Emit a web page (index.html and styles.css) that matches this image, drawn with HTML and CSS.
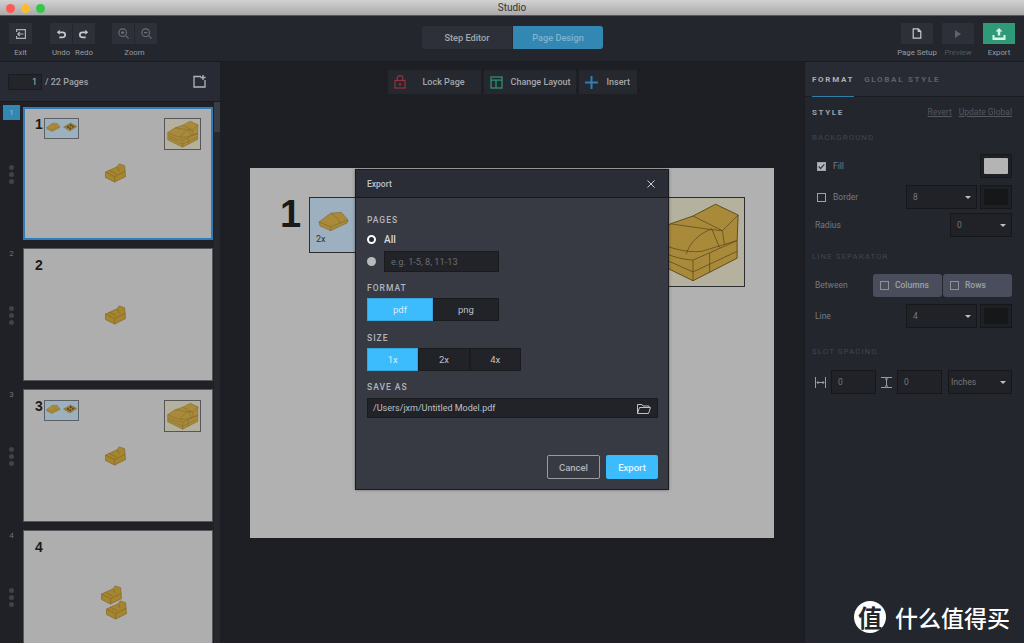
FILE: index.html
```html
<!DOCTYPE html>
<html lang="en">
<head>
    <meta charset="UTF-8">
    <meta name="viewport" content="width=device-width, initial-scale=1.0">
    <title>Studio</title>
    <link rel="stylesheet" href="styles.css">
</head>
<body>
    <svg class="defs" width="0" height="0">
        <symbol id="model" viewBox="0 0 105 89">
            <path d="M8 40 30 26 53 18 76 6 99 17 98 43V61L53 84 8 62Z" fill="#a98a3a" stroke="#5f4c1e"/>
            <path d="M8 40C25 50 45 56 62 54L98 43M8 48C25 58 40 62 53 63L98 43M8 55 53 75 98 54M53 63V84M70 56V76M30 26C45 28 70 32 83 33L85 47M53 18 83 33 99 17M46 57C50 44 60 36 72 31M72 31 80 50" fill="none" stroke="#5f4c1e" stroke-width=".8"/>
        </symbol>
        <symbol id="wedge" viewBox="0 0 32 20">
            <path d="M1 11 13 2 24 1 31 9 30 12 13 20 2 15Z" fill="#a98a3a" stroke="#7d6428" stroke-width=".6"/>
            <path d="M1 11 13 16 31 9M13 16V20M13 2C18 5 22 9 23 12" fill="none" stroke="#7d6428" stroke-width=".6"/>
        </symbol>
        <symbol id="plate" viewBox="0 0 32 20">
            <path d="M1 10 17 1 31 9 15 19Z" fill="#9a7a2e" stroke="#6b5520" stroke-width=".6"/>
            <circle cx="11" cy="10" r="2" fill="#4e3e17"/><circle cx="17" cy="6" r="2" fill="#4e3e17"/>
            <circle cx="16" cy="13" r="2" fill="#4e3e17"/><circle cx="22" cy="9" r="2" fill="#4e3e17"/>
        </symbol>
        <symbol id="brick" viewBox="0 0 24 22">
            <path d="M1 10 14 4 16 1 22 3 23 15 11 21 1 16Z" fill="#a5852f" stroke="#7f6624" stroke-width=".7"/>
            <path d="M1 10 11 15 23 9M11 15V21M14 4 16 9M5 8 13 12" fill="none" stroke="#7f6624" stroke-width=".7"/>
        </symbol>
        <symbol id="caret" viewBox="0 0 8 4"><path d="M0 0H8L4 4Z" fill="currentColor"/></symbol>
    </svg>

    <div class="app">
        <div class="titlebar">
            <div class="lights"><i class="red"></i><i class="yellow"></i><i class="green"></i></div>
            <span>Studio</span>
        </div>

        <header class="toolbar">
            <div class="tool-left">
                <div class="tool-group">
                    <div class="tool-btns">
                        <div class="tool-btn"><svg width="10" height="10" viewBox="0 0 10 10" fill="none" stroke="#aeb0b5" stroke-width="1.2"><path d="M.6 3V.6H9.4V9.4H.6V7"/><path d="M7.5 5H1.8M3.8 3 1.8 5l2 2"/></svg></div>
                    </div>
                    <label>Exit</label>
                </div>
                <div class="tool-group">
                    <div class="tool-btns">
                        <div class="tool-btn"><svg width="10" height="10" viewBox="0 0 12 12" fill="none" stroke="#c8c9cc" stroke-width="2"><path d="M4 4H8a2.6 2.6 0 0 1 0 6H4"/><path d="M1 4 4.5 1V7Z" fill="#c8c9cc" stroke="none"/></svg></div>
                        <div class="tool-btn"><svg width="10" height="10" viewBox="0 0 12 12" fill="none" stroke="#c8c9cc" stroke-width="2"><path d="M8 4H4a2.6 2.6 0 0 0 0 6H8"/><path d="M11 4 7.5 1V7Z" fill="#c8c9cc" stroke="none"/></svg></div>
                    </div>
                    <div class="tool-btns">
                        <label class="pair">Undo</label>
                        <label class="pair">Redo</label>
                    </div>
                </div>
                <div class="tool-group zoom">
                    <div class="tool-btns">
                        <div class="tool-btn"><svg width="11" height="11" viewBox="0 0 13 13" fill="none" stroke="#6c6f76" stroke-width="1.3"><circle cx="5.5" cy="5.5" r="4.5"/><path d="M9 9 12.5 12.5M3.5 5.5H7.5M5.5 3.5V7.5"/></svg></div>
                        <div class="tool-btn"><svg width="11" height="11" viewBox="0 0 13 13" fill="none" stroke="#6c6f76" stroke-width="1.3"><circle cx="5.5" cy="5.5" r="4.5"/><path d="M9 9 12.5 12.5M3.5 5.5H7.5"/></svg></div>
                    </div>
                    <label>Zoom</label>
                </div>
            </div>
            <div class="mode-tabs">
                <div class="mode-tab">Step Editor</div>
                <div class="mode-tab active">Page Design</div>
            </div>
            <div class="tool-right">
                <div class="tool-group">
                    <div class="tool-btn wide"><svg width="10" height="11" viewBox="0 0 11 13" fill="none" stroke="#c8c9cc" stroke-width="1.4"><path d="M1 1H7L10 4V12H1Z"/><path d="M7 1V4H10" fill="#c8c9cc"/></svg></div>
                    <label>Page Setup</label>
                </div>
                <div class="tool-group">
                    <div class="tool-btn wide"><svg width="8" height="10" viewBox="0 0 8 10"><path d="M1 1 7 5 1 9Z" fill="#5f6268"/></svg></div>
                    <label class="off">Preview</label>
                </div>
                <div class="tool-group">
                    <div class="tool-btn wide export"><svg width="14" height="12" viewBox="0 0 14 12" fill="#dff2ea"><path d="M7 0 10.5 3.5H8.2V7.5H5.8V3.5H3.5Z"/><path d="M0.5 7H2.5V9.5H11.5V7H13.5V12H.5Z"/></svg></div>
                    <label>Export</label>
                </div>
            </div>
        </header>

        <main class="workspace">
            <aside class="pages">
                <div class="pages-head">
                    <div class="page-input">1</div>
                    <span class="page-total">/ 22 Pages</span>
                    <svg class="add-page" width="13" height="13" viewBox="0 0 13 13" fill="none" stroke="#b4b5b9" stroke-width="1.3"><path d="M8 1.5H1V12H12V5"/><path d="M10 0V5M7.5 2.5H12.5"/></svg>
                </div>
                <div class="pages-body">
                    <div class="thumb-list">
                        <div class="thumb-row">
                            <div class="gutter"><span class="row-num current">1</span><span class="dots"><i></i><i></i><i></i></span></div>
                            <div class="thumb selected">
                                <b class="thumb-num">1</b>
                                <div class="thumb-callout"><svg><use href="#wedge"/></svg><svg><use href="#plate"/></svg></div>
                                <div class="thumb-final"><svg><use href="#model"/></svg></div>
                                <svg class="thumb-brick"><use href="#brick"/></svg>
                            </div>
                        </div>
                        <div class="thumb-row">
                            <div class="gutter"><span class="row-num">2</span><span class="dots"><i></i><i></i><i></i></span></div>
                            <div class="thumb">
                                <b class="thumb-num">2</b>
                                <svg class="thumb-brick"><use href="#brick"/></svg>
                            </div>
                        </div>
                        <div class="thumb-row">
                            <div class="gutter"><span class="row-num">3</span><span class="dots"><i></i><i></i><i></i></span></div>
                            <div class="thumb">
                                <b class="thumb-num">3</b>
                                <div class="thumb-callout"><svg><use href="#wedge"/></svg><svg><use href="#plate"/></svg></div>
                                <div class="thumb-final"><svg><use href="#model"/></svg></div>
                                <svg class="thumb-brick"><use href="#brick"/></svg>
                            </div>
                        </div>
                        <div class="thumb-row">
                            <div class="gutter"><span class="row-num">4</span><span class="dots"><i></i><i></i><i></i></span></div>
                            <div class="thumb">
                                <b class="thumb-num">4</b>
                                <svg class="thumb-brick upper"><use href="#brick"/></svg>
                                <svg class="thumb-brick lower"><use href="#brick"/></svg>
                            </div>
                        </div>
                    </div>
                    <div class="scroll"><div class="scroll-bar"></div></div>
                </div>
            </aside>

            <section class="canvas">
                <div class="canvas-tools">
                    <div class="canvas-btn lock"><svg width="12" height="14" viewBox="0 0 12 14" fill="none" stroke="#96323f" stroke-width="1.2"><rect x="1" y="5.5" width="10" height="7.5"/><path d="M3.2 5.5V3.5a2.8 2.8 0 0 1 5.6 0V5.5"/><circle cx="6" cy="9.2" r=".6" fill="#96323f"/></svg><span>Lock Page</span></div>
                    <div class="canvas-btn layout"><svg width="13" height="13" viewBox="0 0 13 13" fill="none" stroke="#2f8f74" stroke-width="1.3"><rect x="1" y="1" width="11" height="11"/><path d="M1 4.2H12M6 4.2V12"/></svg><span>Change Layout</span></div>
                    <div class="canvas-btn insert"><svg width="13" height="13" viewBox="0 0 13 13" fill="none" stroke="#2f7fb8" stroke-width="2"><path d="M6.5 0V13M0 6.5H13"/></svg><span>Insert</span></div>
                </div>
                <div class="sheet">
                    <b class="sheet-num">1</b>
                    <div class="sheet-callout"><svg><use href="#wedge"/></svg><span>2x</span></div>
                    <div class="sheet-final"><svg><use href="#model"/></svg></div>
                </div>
            </section>

            <aside class="props">
                <div class="props-tabs">
                    <div class="props-tab active">FORMAT</div>
                    <div class="props-tab">GLOBAL STYLE</div>
                </div>
                <div class="props-body">
                    <div class="style-head">
                        <strong>STYLE</strong>
                        <span class="style-links"><a>Revert</a><a>Update Global</a></span>
                    </div>

                    <h4 class="section">BACKGROUND</h4>
                    <div class="prop-row">
                        <span class="check on"><svg width="8" height="7" viewBox="0 0 8 7" fill="none" stroke="#3a3c42" stroke-width="1.5"><path d="M.8 3.5 3 5.7 7.2 1"/></svg></span>
                        <span class="prop-name">Fill</span>
                        <span class="swatch"><i class="light"></i></span>
                    </div>
                    <div class="prop-row">
                        <span class="check"></span>
                        <span class="prop-name">Border</span>
                        <span class="select w71">8<svg class="caret"><use href="#caret"/></svg></span>
                        <span class="swatch"><i></i></span>
                    </div>
                    <div class="prop-row plain tight">
                        <span class="prop-name">Radius</span>
                        <span class="select w62">0<svg class="caret"><use href="#caret"/></svg></span>
                    </div>

                    <h4 class="section line-sep">LINE SEPARATOR</h4>
                    <div class="prop-row plain">
                        <span class="prop-name">Between</span>
                        <div class="toggles">
                            <span class="toggle"><span class="check"></span>Columns</span>
                            <span class="toggle"><span class="check"></span>Rows</span>
                        </div>
                    </div>
                    <div class="prop-row plain">
                        <span class="prop-name">Line</span>
                        <span class="select w71">4<svg class="caret"><use href="#caret"/></svg></span>
                        <span class="swatch"><i></i></span>
                    </div>

                    <h4 class="section slot">SLOT SPACING</h4>
                    <div class="spacing-row">
                        <svg width="11" height="11" viewBox="0 0 11 11" fill="none" stroke="#9a9ca1"><path d="M.5 0V11M10.5 0V11M2 5.5H9M3.5 4 2 5.5 3.5 7M7.5 4 9 5.5 7.5 7"/></svg>
                        <span class="num-input">0</span>
                        <svg width="11" height="11" viewBox="0 0 11 11" fill="none" stroke="#9a9ca1"><path d="M0 .5H11M0 10.5H11M5.5 2V9M4 2H7M4 9H7"/></svg>
                        <span class="num-input">0</span>
                        <span class="select unit">Inches<svg class="caret"><use href="#caret"/></svg></span>
                    </div>
                </div>
            </aside>
        </main>

        <div class="modal">
            <div class="modal-head">
                <span>Export</span>
                <svg width="8" height="8" viewBox="0 0 9 9" fill="none" stroke="#d0d1d4" stroke-width="1.1"><path d="M.5.5 8.5 8.5M8.5.5.5 8.5"/></svg>
            </div>
            <div class="modal-body">
                <div class="field-label">PAGES</div>
                <div class="radio-row all"><span class="radio on"></span><b>All</b></div>
                <div class="radio-row range"><span class="radio"></span><span class="range-input">e.g. 1-5, 8, 11-13</span></div>
                <div class="field-label format">FORMAT</div>
                <div class="segments">
                    <span class="seg on w65">pdf</span><span class="seg w66">png</span>
                </div>
                <div class="field-label size">SIZE</div>
                <div class="segments">
                    <span class="seg on w51">1x</span><span class="seg w51">2x</span><span class="seg w51">4x</span>
                </div>
                <div class="field-label saveas">SAVE AS</div>
                <div class="path-input">
                    <span>/Users/jxm/Untitled Model.pdf</span>
                    <svg width="14" height="11" viewBox="0 0 14 11" fill="none" stroke="#bfc0c4"><path d="M.5 10.5V1.5H5L6 3H12V4.5M.5 10.5H11.5L13.5 4.5H2.5L.5 10.5Z"/></svg>
                </div>
                <div class="modal-actions">
                    <span class="btn cancel">Cancel</span>
                    <span class="btn confirm">Export</span>
                </div>
            </div>
        </div>

        <div class="watermark">
            <span class="wm-logo">值</span>
            <span class="wm-text">什么值得买</span>
        </div>
    </div>
</body>
</html>
```

FILE: styles.css
```css
* {
    box-sizing: border-box;
}
body {
    margin: 0;
    font-family: Roboto, "Liberation Sans", sans-serif;
    background: #1d1f24;
}
.defs {
    position: absolute;
}
.app {
    position: relative;
    width: 1024px;
    height: 643px;
    overflow: hidden;
    display: flex;
    flex-direction: column;
}

/* title bar */
.titlebar {
    height: 16px;
    flex: none;
    display: flex;
    align-items: center;
    justify-content: center;
    position: relative;
    background: linear-gradient(#d2d2d2, #a9a9a9);
    border-bottom: 1px solid #54565a;
    font-size: 10px;
    color: #333;
}
.lights {
    position: absolute;
    left: 6px;
    top: 4px;
    display: flex;
    gap: 6px;
}
.lights i {
    width: 9px;
    height: 9px;
    border-radius: 50%;
}
.lights .red { background: #fc5b57; }
.lights .yellow { background: #fdbb2e; }
.lights .green { background: #33c748; }

/* top toolbar */
.toolbar {
    height: 46px;
    flex: none;
    display: flex;
    justify-content: space-between;
    position: relative;
    background: #23262d;
    border-bottom: 1px solid #191b1f;
    padding: 7px 9px 0;
}
.tool-left, .tool-right {
    display: flex;
}
.tool-left {
    gap: 18px;
}
.tool-right {
    gap: 9px;
}
.tool-group {
    display: flex;
    flex-direction: column;
    align-items: center;
}
.tool-group.zoom {
    margin-left: -1px;
}
.tool-right .tool-group {
    width: 32px;
}
.tool-group label {
    margin-top: 4px;
    font-size: 7.8px;
    line-height: 10px;
    color: #9a9ca1;
    white-space: pre;
}
.tool-group label.off {
    color: #55585e;
}
.tool-group label.pair {
    width: 22px;
    text-align: center;
}
.tool-btns {
    display: flex;
    gap: 1px;
}
.tool-btn {
    width: 22px;
    height: 21px;
    display: flex;
    align-items: center;
    justify-content: center;
    background: #2d3039;
}
.tool-left .tool-group:first-child .tool-btn {
    width: 23px;
}
.tool-btn.wide {
    width: 32px;
}
.tool-btn.export {
    background: #2f9a78;
}
.mode-tabs {
    position: absolute;
    left: 422px;
    top: 10px;
    display: flex;
    gap: 1px;
}
.mode-tab {
    width: 90px;
    height: 23px;
    display: flex;
    align-items: center;
    justify-content: center;
    background: #2d3039;
    border-radius: 3px 0 0 3px;
    font-size: 9.2px;
    font-weight: 500;
    color: #a5a7ac;
}
.mode-tab.active {
    background: #3388b3;
    border-radius: 0 3px 3px 0;
    color: #7fb4cf;
}

.workspace {
    flex: 1;
    display: flex;
    min-height: 0;
}

/* left page list */
.pages {
    width: 220px;
    flex: none;
    display: flex;
    flex-direction: column;
    background: #1f2126;
}
.pages-head {
    height: 40px;
    flex: none;
    display: flex;
    align-items: center;
    padding: 0 14px 0 8px;
    background: #282b33;
    border-bottom: 1px solid #1a1c20;
}
.page-input {
    width: 34px;
    height: 16px;
    padding-right: 4px;
    text-align: right;
    background: #23252b;
    border: 1px solid #1b1c20;
    font-size: 9px;
    line-height: 14px;
    color: #b8b9bd;
}
.page-total {
    margin-left: 3px;
    font-size: 9px;
    font-weight: 500;
    color: #a0a2a7;
}
.add-page {
    margin-left: auto;
}
.pages-body {
    flex: 1;
    display: flex;
    min-height: 0;
    overflow: hidden;
}
.thumb-list {
    width: 214px;
    padding-top: 5px;
}
.thumb-row {
    height: 141px;
    display: flex;
}
.gutter {
    width: 23px;
    display: flex;
    flex-direction: column;
    align-items: center;
    margin-top: -2px;
}
.row-num {
    width: 17px;
    height: 15px;
    font-size: 8px;
    line-height: 15px;
    text-align: center;
    color: #6f7278;
}
.row-num.current {
    background: #3388b3;
    color: #8fc0d8;
}
.dots {
    margin-top: 45px;
    display: flex;
    flex-direction: column;
    gap: 2px;
}
.dots i {
    width: 5px;
    height: 5px;
    border-radius: 50%;
    background: #3f4249;
}
.thumb {
    position: relative;
    width: 190px;
    height: 133px;
    background: #aeaeae;
    border: 1px solid #55575c;
}
.thumb.selected {
    border: 2px solid #2f7cbd;
}
.thumb-num {
    position: absolute;
    left: 11px;
    top: 8px;
    font-family: "Liberation Sans", sans-serif;
    font-size: 14px;
    line-height: 16px;
    color: #1b1b1b;
}
.selected .thumb-num {
    left: 10px;
    top: 7px;
}
.thumb-callout {
    position: absolute;
    left: 20px;
    top: 10px;
    width: 35px;
    height: 21px;
    display: flex;
    padding: 3px 1px;
    gap: 2px;
    background: #9db0bf;
    border: 1px solid #5c6064;
}
.selected .thumb-callout {
    left: 19px;
    top: 9px;
}
.thumb-callout svg {
    width: 15px;
    height: 10px;
}
.thumb-final {
    position: absolute;
    right: 11px;
    top: 10px;
    width: 37px;
    height: 32px;
    background: #b5b19f;
    border: 1px solid #55565a;
}
.selected .thumb-final {
    right: 10px;
    top: 9px;
}
.thumb-final svg {
    display: block;
    width: 35px;
    height: 30px;
}
.thumb-brick {
    position: absolute;
    left: 80px;
    top: 56px;
    width: 23px;
    height: 20px;
}
.selected .thumb-brick {
    left: 79px;
    top: 54px;
}
.thumb-brick.upper {
    left: 76px;
    top: 54px;
}
.thumb-brick.lower {
    left: 81px;
    top: 69px;
}
.scroll {
    width: 6px;
    background: #26282e;
}
.scroll-bar {
    height: 30px;
    background: #3a3d44;
}

/* canvas in the middle */
.canvas {
    flex: 1;
    display: flex;
    flex-direction: column;
    background: #1d1f24;
}
.canvas-tools {
    display: flex;
    justify-content: center;
    gap: 3px;
    padding-top: 8px;
}
.canvas-btn {
    height: 24px;
    display: flex;
    align-items: center;
    background: #25282e;
    font-size: 9px;
    font-weight: 500;
    color: #a5a7ac;
}
.canvas-btn.lock {
    width: 93px;
    padding-left: 6px;
    gap: 17px;
}
.canvas-btn.layout {
    width: 92px;
    padding-left: 6px;
    gap: 8px;
}
.canvas-btn.insert {
    width: 58px;
    padding-left: 6px;
    gap: 9px;
}
.sheet {
    position: relative;
    width: 524px;
    height: 370px;
    margin: 74px 0 0 30px;
    background: #b1b1b1;
}
.sheet-num {
    position: absolute;
    left: 30px;
    top: 26px;
    font-family: "Liberation Sans", sans-serif;
    font-size: 38px;
    line-height: 40px;
    color: #1a1a1a;
}
.sheet-callout {
    position: absolute;
    left: 59px;
    top: 29px;
    width: 95px;
    height: 56px;
    padding: 13px 0 0 6px;
    background: #9db0bf;
    border: 1px solid #2b2d30;
}
.sheet-callout svg {
    display: block;
    width: 31px;
    height: 20px;
    margin-left: 2px;
}
.sheet-callout span {
    display: block;
    margin-top: 3px;
    font-size: 9px;
    color: #333;
}
.sheet-final {
    position: absolute;
    left: 390px;
    top: 29px;
    width: 105px;
    height: 90px;
    background: #b5b19f;
    border: 1px solid #2b2d30;
}
.sheet-final svg {
    display: block;
    width: 103px;
    height: 88px;
}

/* right properties panel */
.props {
    width: 220px;
    flex: none;
    display: flex;
    flex-direction: column;
    background: #23262c;
    border-left: 1px solid #1a1c20;
}
.props-tabs {
    height: 35px;
    flex: none;
    display: flex;
    gap: 10px;
    padding-left: 7px;
    background: #282b33;
    border-bottom: 1px solid #1a1c20;
}
.props-tab {
    padding-top: 13px;
    font-size: 8px;
    font-weight: 700;
    letter-spacing: 1.7px;
    color: #5f6268;
}
.props-tab.active {
    color: #aeb0b4;
    border-bottom: 1px solid #2f7fa8;
    height: 35px;
}
.props-body {
    padding: 0 12px 0 7px;
}
.style-head {
    display: flex;
    justify-content: space-between;
    align-items: center;
    height: 30px;
}
.style-head strong {
    font-size: 8px;
    letter-spacing: 1.6px;
    color: #a0a2a7;
}
.style-links {
    display: flex;
    gap: 7px;
    font-size: 8.5px;
    color: #55585e;
}
.style-links a {
    text-decoration: underline;
}
.section {
    margin: 6px 0 0;
    height: 10px;
    font-size: 8px;
    line-height: 10px;
    font-weight: 400;
    letter-spacing: 1px;
    color: #42454c;
}
.section.line-sep {
    margin-top: 15px;
}
.section.slot {
    margin-top: 19px;
}
.prop-row {
    height: 24px;
    display: flex;
    align-items: center;
    margin-top: 7px;
    padding-left: 5px;
}
.section + .prop-row {
    margin-top: 11px;
}
.prop-row.tight {
    margin-top: 4px;
}
.prop-row.plain {
    padding-left: 3px;
}
.check {
    width: 9px;
    height: 9px;
    display: inline-flex;
    align-items: center;
    justify-content: center;
    margin-right: 7px;
    border: 1px solid #a0a2a7;
    flex: none;
}
.check.on {
    background: #b4b5b8;
}
.prop-name {
    font-size: 8.5px;
    color: #777a80;
}
.select {
    height: 24px;
    display: flex;
    align-items: center;
    justify-content: space-between;
    padding: 0 5px 0 6px;
    background: #202228;
    border: 1px solid #16171a;
    font-size: 8.5px;
    color: #74777d;
}
.select .caret {
    width: 6px;
    height: 3px;
    color: #bfc0c4;
}
.w71 {
    width: 71px;
    margin-left: auto;
    margin-right: 3px;
}
.w62 {
    width: 62px;
    margin-left: auto;
}
.swatch {
    width: 32px;
    height: 24px;
    margin-left: auto;
    padding: 3px;
    background: #1e2025;
    border: 1px solid #16171a;
    flex: none;
}
.w71 + .swatch {
    margin-left: 0;
}
.swatch i {
    display: block;
    height: 100%;
    background: #161719;
    border-radius: 1px;
}
.swatch i.light {
    background: #b4b4b4;
}
.toggles {
    display: flex;
    gap: 1px;
    margin-left: auto;
}
.toggle {
    width: 69px;
    height: 23px;
    display: flex;
    align-items: center;
    padding-left: 7px;
    background: #4a4e5c;
    border-radius: 3px;
    font-size: 8.5px;
    font-weight: 500;
    color: #9ea0a6;
}
.toggle .check {
    margin-right: 6px;
    border-color: #8f9199;
}
.spacing-row {
    display: flex;
    align-items: center;
    height: 24px;
    margin-top: 13px;
    padding-left: 3px;
}
.spacing-row svg {
    flex: none;
}
.num-input {
    width: 45px;
    height: 24px;
    margin: 0 5px;
    padding-left: 6px;
    background: #202228;
    border: 1px solid #16171a;
    font-size: 8.5px;
    line-height: 22px;
    color: #74777d;
}
.select.unit {
    width: 64px;
    margin-left: 1px;
    padding-left: 2px;
}

/* export dialog */
.modal {
    position: absolute;
    left: 355px;
    top: 169px;
    width: 314px;
    height: 321px;
    background: #373a43;
    border: 1px solid #1b1c20;
    box-shadow: 0 0 3px rgba(0, 0, 0, 0.4);
}
.modal-head {
    height: 28px;
    display: flex;
    align-items: center;
    justify-content: space-between;
    padding: 0 13px 0 11px;
    background: #2a2c36;
    border-bottom: 1px solid #17181b;
    font-size: 8.5px;
    font-weight: 500;
    color: #c2c3c7;
}
.modal-body {
    padding: 17px 10px 0 11px;
}
.field-label {
    height: 11px;
    font-size: 8.5px;
    line-height: 11px;
    font-weight: 500;
    letter-spacing: 1px;
    color: #b4b5ba;
}
.field-label.format {
    margin-top: 11px;
}
.field-label.size {
    margin-top: 12px;
}
.field-label.saveas {
    margin-top: 11px;
}
.radio-row {
    display: flex;
    align-items: center;
    gap: 8px;
    height: 21px;
    font-size: 10px;
    color: #d8d9dc;
}
.radio-row.all {
    height: 17px;
    margin-top: 5px;
}
.radio-row.range {
    margin-top: 3px;
}
.radio-row b {
    font-weight: 500;
}
.radio {
    width: 9px;
    height: 9px;
    border-radius: 50%;
    background: #b9babd;
}
.radio.on {
    background: #2a2c33;
    border: 2.5px solid #fff;
}
.range-input {
    width: 115px;
    height: 21px;
    padding-left: 6px;
    background: #212329;
    border: 1px solid #1a1b1f;
    font-size: 9.2px;
    line-height: 19px;
    color: #6a6d73;
}
.segments {
    display: flex;
    margin-top: 4px;
    height: 23px;
}
.seg {
    display: flex;
    align-items: center;
    justify-content: center;
    background: #212329;
    border: 1px solid #1a1b1f;
    font-size: 9.5px;
    color: #bfc0c4;
}
.seg.on {
    background: #3cbcfc;
    border-color: #37a6dc;
    color: #d6effb;
}
.w65 { width: 66px; }
.w66 { width: 66px; }
.w51 { width: 51.33px; }
.path-input {
    height: 20px;
    margin-top: 5px;
    display: flex;
    align-items: center;
    justify-content: space-between;
    padding: 0 6px 0 5px;
    background: #212329;
    border: 1px solid #1a1b1f;
    font-size: 9px;
    color: #bfc0c4;
}
.modal-actions {
    display: flex;
    justify-content: flex-end;
    gap: 6px;
    margin-top: 37px;
}
.btn {
    height: 24px;
    display: flex;
    align-items: center;
    justify-content: center;
    border-radius: 2px;
    font-size: 9.5px;
    font-weight: 500;
}
.btn.cancel {
    width: 53px;
    border: 1px solid #9a9ba0;
    color: #b4b5ba;
}
.btn.confirm {
    width: 52px;
    background: #3cbcfc;
    color: #e4f5fe;
}

/* site watermark */
.watermark {
    position: absolute;
    left: 854px;
    top: 601px;
    display: flex;
    align-items: center;
    gap: 9px;
}
.wm-logo {
    width: 32px;
    height: 32px;
    border-radius: 50%;
    background: #fff;
    color: #23262c;
    font-family: "Noto Sans CJK SC", sans-serif;
    font-size: 24px;
    font-weight: 700;
    line-height: 31px;
    text-align: center;
}
.wm-text {
    font-family: "Noto Sans CJK SC", sans-serif;
    font-size: 23px;
    font-weight: 500;
    line-height: 32px;
    color: #fff;
}
```
